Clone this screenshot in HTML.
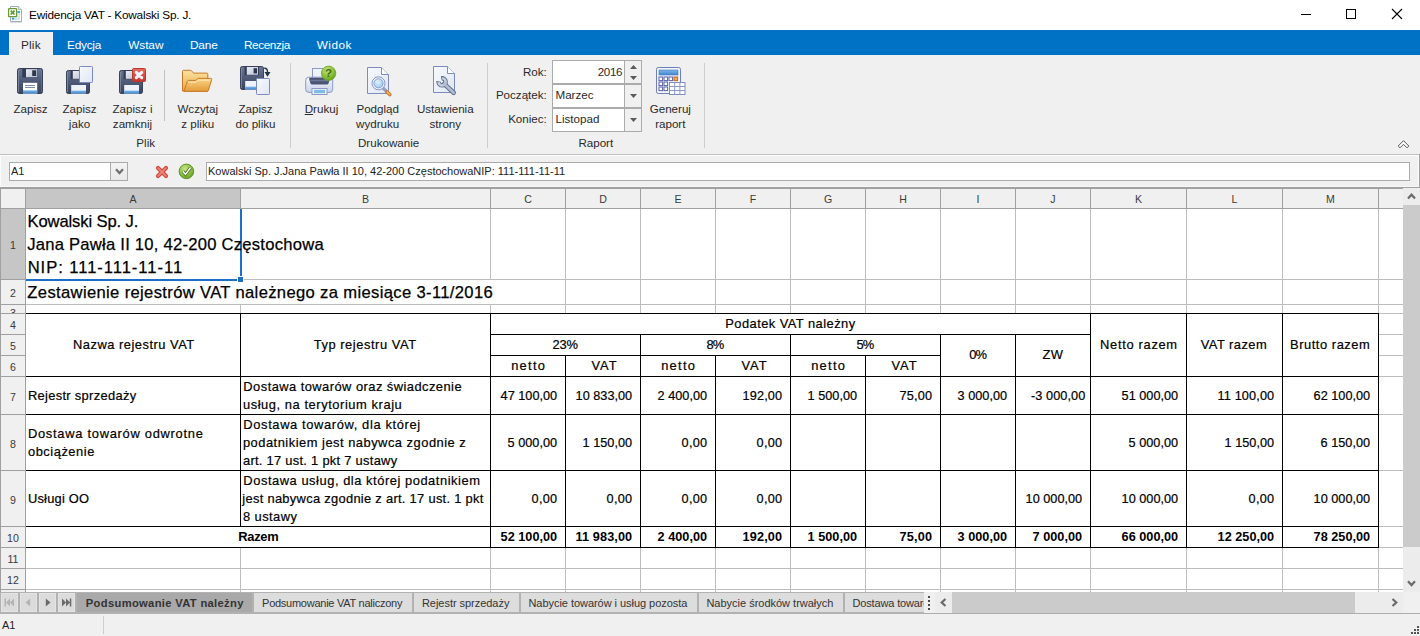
<!DOCTYPE html>
<html lang="pl"><head><meta charset="utf-8"><title>Ewidencja VAT - Kowalski Sp. J.</title>
<style>
html,body{margin:0;padding:0;}
body{width:1420px;height:636px;overflow:hidden;position:relative;background:#f0f0f0;font-family:"Liberation Sans", sans-serif;}
.t{position:absolute;white-space:pre;line-height:1;font-family:"Liberation Sans", sans-serif;}
.r{position:absolute;}
svg{position:absolute;overflow:visible;}
</style></head><body>
<div id="titlebar">
<div class="r" style="left:0px;top:0px;width:1420px;height:30px;background:#ffffff;"></div>
<svg style="left:7px;top:5px" width="17" height="18" viewBox="0 0 17 18">
<path d="M3.500 17.200h11.500" stroke="#c9cfd2" stroke-width="1"/>
<path d="M3.500 1.500h8l3 3v12h-11z" fill="#fdfefe" stroke="#a3b0b8" stroke-width="1"/>
<path d="M11.500 1.500v3h3" fill="#eef2f4" stroke="#a3b0b8" stroke-width=".8"/>
<rect x="10.400" y="6" width="2.500" height="2.200" fill="#2fa8f0"/>
<rect x="10.400" y="9" width="2.500" height="1.600" fill="#d5dde2"/><rect x="10.400" y="11" width="2.500" height="1.600" fill="#d5dde2"/>
<rect x="5" y="12.600" width="2.300" height="2.100" fill="#2fa8f0"/><rect x="8" y="12.600" width="2" height="2.100" fill="#b9dff8"/><rect x="10.600" y="12.600" width="2.300" height="2.100" fill="#d5dde2"/>
<rect x="1.600" y="3.600" width="8" height="8" rx=".6" fill="#ffffff" stroke="#6b9b37" stroke-width="1.300"/>
<path d="M3.700 5.700l3.800 3.800M7.500 5.700l-3.800 3.800" stroke="#5f9a2c" stroke-width="1.700"/>
</svg>
<span class="t" style="top:10.00px;font-size:11.8px;color:#000;letter-spacing:-0.208px;left:29.11px;">Ewidencja VAT - Kowalski Sp. J.</span>
<div class="r" style="left:1301px;top:14px;width:10px;height:1px;background:#000;"></div>
<div class="r" style="left:1346px;top:9px;width:10px;height:10px;background:transparent;box-sizing:border-box;border:1px solid #000;"></div>
<svg style="left:1392px;top:9px" width="10" height="10" viewBox="0 0 10 10"><path d="M0 0L10 10M10 0L0 10" stroke="#000" stroke-width="1.1"/></svg>
</div><div id="ribbon-tabs">
<div class="r" style="left:0px;top:30px;width:1420px;height:25px;background:#0072c6;"></div>
<div class="r" style="left:9px;top:32px;width:44px;height:23px;background:#f0f0f0;"></div>
<span class="t" style="top:40.00px;font-size:11.8px;color:#2b2b2b;letter-spacing:0.229px;left:20.91px;">Plik</span>
<span class="t" style="top:40.00px;font-size:11.8px;color:#ffffff;letter-spacing:-0.223px;left:67.01px;">Edycja</span>
<span class="t" style="top:40.00px;font-size:11.8px;color:#ffffff;letter-spacing:-0.049px;left:128.21px;">Wstaw</span>
<span class="t" style="top:40.00px;font-size:11.8px;color:#ffffff;letter-spacing:-0.169px;left:190.01px;">Dane</span>
<span class="t" style="top:40.00px;font-size:11.8px;color:#ffffff;letter-spacing:-0.399px;left:243.91px;">Recenzja</span>
<span class="t" style="top:40.00px;font-size:11.8px;color:#ffffff;letter-spacing:0.504px;left:316.71px;">Widok</span>
</div><div id="ribbon">
<div class="r" style="left:0px;top:55px;width:1420px;height:99px;background:#f0f0f0;"></div>
<div class="r" style="left:0px;top:154px;width:1419px;height:1px;background:#c0c0c0;"></div>
<span class="t" style="top:103.00px;font-size:11.6px;color:#2a2a2a;left:-269.50px;width:600px;text-align:center;">Zapisz</span>
<span class="t" style="top:103.00px;font-size:11.6px;color:#2a2a2a;left:-220.50px;width:600px;text-align:center;">Zapisz</span>
<span class="t" style="top:118.00px;font-size:11.6px;color:#2a2a2a;left:-220.50px;width:600px;text-align:center;">jako</span>
<span class="t" style="top:103.00px;font-size:11.6px;color:#2a2a2a;left:-167.50px;width:600px;text-align:center;">Zapisz i</span>
<span class="t" style="top:118.00px;font-size:11.6px;color:#2a2a2a;left:-167.50px;width:600px;text-align:center;">zamknij</span>
<span class="t" style="top:103.00px;font-size:11.6px;color:#2a2a2a;left:-102.30px;width:600px;text-align:center;">Wczytaj</span>
<span class="t" style="top:118.00px;font-size:11.6px;color:#2a2a2a;left:-102.30px;width:600px;text-align:center;">z pliku</span>
<span class="t" style="top:103.00px;font-size:11.6px;color:#2a2a2a;left:-44.50px;width:600px;text-align:center;">Zapisz</span>
<span class="t" style="top:118.00px;font-size:11.6px;color:#2a2a2a;left:-44.50px;width:600px;text-align:center;">do pliku</span>
<span class="t" style="left:21.5px;width:600px;text-align:center;top:103px;font-size:11.6px;color:#2a2a2a;margin-left:0"><u>D</u>rukuj</span>
<span class="t" style="top:103.00px;font-size:11.6px;color:#2a2a2a;left:77.70px;width:600px;text-align:center;">Podgląd</span>
<span class="t" style="top:118.00px;font-size:11.6px;color:#2a2a2a;left:77.70px;width:600px;text-align:center;">wydruku</span>
<span class="t" style="top:103.00px;font-size:11.6px;color:#2a2a2a;left:145.30px;width:600px;text-align:center;">Ustawienia</span>
<span class="t" style="top:118.00px;font-size:11.6px;color:#2a2a2a;left:145.30px;width:600px;text-align:center;">strony</span>
<span class="t" style="top:103.00px;font-size:11.6px;color:#2a2a2a;left:370.30px;width:600px;text-align:center;">Generuj</span>
<span class="t" style="top:118.00px;font-size:11.6px;color:#2a2a2a;left:370.30px;width:600px;text-align:center;">raport</span>
<span class="t" style="top:137.00px;font-size:11.6px;color:#2a2a2a;left:-154.30px;width:600px;text-align:center;">Plik</span>
<span class="t" style="top:137.00px;font-size:11.6px;color:#2a2a2a;left:88.60px;width:600px;text-align:center;">Drukowanie</span>
<span class="t" style="top:137.00px;font-size:11.6px;color:#2a2a2a;left:295.80px;width:600px;text-align:center;">Raport</span>
<div class="r" style="left:164px;top:70px;width:1px;height:51px;background:#c2c2c2;"></div>
<div class="r" style="left:290px;top:63px;width:1px;height:85px;background:#cdcdcd;"></div>
<div class="r" style="left:487px;top:63px;width:1px;height:85px;background:#cdcdcd;"></div>
<div class="r" style="left:704px;top:63px;width:1px;height:85px;background:#cdcdcd;"></div>
<span class="t" style="top:66.00px;font-size:11.6px;color:#2a2a2a;right:873.20px;">Rok:</span>
<span class="t" style="top:89.00px;font-size:11.6px;color:#2a2a2a;right:873.20px;">Początek:</span>
<span class="t" style="top:113.00px;font-size:11.6px;color:#2a2a2a;right:873.20px;">Koniec:</span>
<div class="r" style="left:552px;top:60px;width:90px;height:24px;background:#ffffff;box-sizing:border-box;border:1px solid #ababab;"></div>
<div class="r" style="left:624px;top:61px;width:16px;height:22px;background:#f0f0f0;border-left:1px solid #ababab;"></div>
<div class="r" style="left:552px;top:84px;width:90px;height:24px;background:#ffffff;box-sizing:border-box;border:1px solid #ababab;"></div>
<div class="r" style="left:624px;top:85px;width:16px;height:22px;background:#f0f0f0;border-left:1px solid #ababab;"></div>
<div class="r" style="left:552px;top:108px;width:90px;height:24px;background:#ffffff;box-sizing:border-box;border:1px solid #ababab;"></div>
<div class="r" style="left:624px;top:109px;width:16px;height:22px;background:#f0f0f0;border-left:1px solid #ababab;"></div>
<span class="t" style="top:66.00px;font-size:11.6px;color:#2a2a2a;letter-spacing:-0.34px;right:797.88px;">2016</span>
<span class="t" style="top:89.00px;font-size:11.6px;color:#2a2a2a;left:555.50px;">Marzec</span>
<span class="t" style="top:113.00px;font-size:11.6px;color:#2a2a2a;left:555.50px;">Listopad</span>
<svg style="left:629px;top:60px" width="9" height="72" viewBox="0 0 9 72"><path d="M1 9h7l-3.5-4zM1 16h7l-3.5 4zM1 34h7l-3.5 4zM1 58h7l-3.5 4z" fill="#5a5a5a"/></svg>
<svg style="left:1397px;top:139px" width="13" height="11" viewBox="0 0 13 11"><path d="M1.2 7L6.5 1.7 11.8 7 10 8.8 6.5 5.3 3 8.8z" fill="#fff" stroke="#555" stroke-width="1" stroke-linejoin="miter"/></svg>
<svg width="0" height="0" style="left:0;top:0"><defs>
<linearGradient id="gfl" x1="0" y1="0" x2="0" y2="1"><stop offset="0" stop-color="#6b7896"/><stop offset="0.45" stop-color="#515d7a"/><stop offset="1" stop-color="#3a435b"/></linearGradient>
<linearGradient id="gmt" x1="0" y1="0" x2="1" y2="1"><stop offset="0" stop-color="#e8edf5"/><stop offset="1" stop-color="#b9c3d6"/></linearGradient>
<linearGradient id="gbl" x1="0" y1="0" x2="0" y2="1"><stop offset="0" stop-color="#7db8e8"/><stop offset="1" stop-color="#3f86cf"/></linearGradient>
<linearGradient id="gpp" x1="0" y1="0" x2="1" y2="1"><stop offset="0" stop-color="#f7f9fd"/><stop offset="1" stop-color="#dfe6f3"/></linearGradient>
<linearGradient id="gfo" x1="0" y1="0" x2="0" y2="1"><stop offset="0" stop-color="#fde3a0"/><stop offset="1" stop-color="#eba743"/></linearGradient>
<linearGradient id="gfo2" x1="0" y1="0" x2="0" y2="1"><stop offset="0" stop-color="#fbd587"/><stop offset="1" stop-color="#e39a38"/></linearGradient>
<linearGradient id="grd" x1="0" y1="0" x2="0" y2="1"><stop offset="0" stop-color="#ea6a5f"/><stop offset="1" stop-color="#c5352c"/></linearGradient>
<radialGradient id="ggr" cx="0.4" cy="0.3" r="0.8"><stop offset="0" stop-color="#c4e27c"/><stop offset="0.6" stop-color="#86bd33"/><stop offset="1" stop-color="#5b9420"/></radialGradient>
<linearGradient id="gpr" x1="0" y1="0" x2="0" y2="1"><stop offset="0" stop-color="#f4f7fc"/><stop offset="1" stop-color="#c9d3ea"/></linearGradient>
<radialGradient id="gln" cx="0.4" cy="0.35" r="0.8"><stop offset="0" stop-color="#e2f1fb"/><stop offset="1" stop-color="#8dc3ea"/></radialGradient>
<linearGradient id="gwr" x1="0" y1="0" x2="1" y2="1"><stop offset="0" stop-color="#d5dcea"/><stop offset="1" stop-color="#8e9bb6"/></linearGradient>
</defs></svg>
<svg style="left:17px;top:68px" width="26" height="26" viewBox="0 0 26 26">
<rect x="0.5" y="0.5" width="25" height="25" rx="1.8" fill="url(#gfl)" stroke="#3a4259"/>
<path d="M1.5 2v22" stroke="#8893ac" stroke-width="1" opacity=".7"/><path d="M24.5 2v22" stroke="#6f7b96" stroke-width="1" opacity=".6"/>
<rect x="5.3" y="0.8" width="15.7" height="8.8" fill="#343b52"/>
<rect x="9" y="1.2" width="11.3" height="8" fill="url(#gmt)"/>
<rect x="15.2" y="2.3" width="4" height="5.7" fill="#2f364c"/>
<rect x="6" y="14.8" width="14.2" height="10.7" fill="#ffffff"/>
<rect x="6" y="22.3" width="14.2" height="3.2" fill="url(#gbl)"/>
<rect x="8" y="17" width="10" height="1" fill="#7f8db3"/><rect x="8" y="19" width="10" height="1" fill="#7f8db3"/>
</svg>
<svg style="left:66px;top:70px" width="24" height="24" viewBox="0 0 24 24">
<rect x="0.5" y="0.5" width="23" height="23" rx="1.8" fill="url(#gfl)" stroke="#3a4259"/>
<path d="M1.5 2v20" stroke="#8893ac" stroke-width="1" opacity=".7"/>
<rect x="4.6" y="0.8" width="14.4" height="8.4" fill="#343b52"/>
<rect x="6.8" y="1" width="11.2" height="7.8" fill="url(#gmt)"/>
<rect x="13.6" y="2.2" width="3.4" height="5.2" fill="#2f364c"/>
<rect x="5.2" y="15" width="14.8" height="8.5" fill="#eef2f9"/>
<rect x="5.2" y="20.6" width="14.8" height="2.9" fill="url(#gbl)"/>
</svg>
<svg style="left:79px;top:66px" width="14" height="17" viewBox="0 0 14 17"><rect x="0.5" y="0.5" width="13" height="16" rx="0.8" fill="url(#gpp)" stroke="#7d8bc0"/></svg>
<svg style="left:119px;top:70px" width="24" height="24" viewBox="0 0 24 24">
<rect x="0.5" y="0.5" width="23" height="23" rx="1.8" fill="url(#gfl)" stroke="#3a4259"/>
<path d="M1.5 2v20" stroke="#8893ac" stroke-width="1" opacity=".7"/>
<rect x="4.6" y="0.8" width="14.4" height="8.4" fill="#343b52"/>
<rect x="6.8" y="1" width="11.2" height="7.8" fill="url(#gmt)"/>
<rect x="13.6" y="2.2" width="3.4" height="5.2" fill="#2f364c"/>
<rect x="5.2" y="15" width="14.8" height="8.5" fill="#eef2f9"/>
<rect x="5.2" y="20.6" width="14.8" height="2.9" fill="url(#gbl)"/>
</svg>
<svg style="left:132px;top:68px" width="14" height="14" viewBox="0 0 14 14"><rect x="0.5" y="0.5" width="13" height="13" rx="1" fill="url(#grd)" stroke="#b8392f"/><path d="M4.300 4.300l5.400 5.400M9.700 4.300l-5.400 5.400" stroke="#f3f6fa" stroke-width="3.100" stroke-linecap="round"/></svg>
<svg style="left:181px;top:69px" width="32" height="24" viewBox="0 0 32 24">
<path d="M1.5 2.3q0-1 1-1h7q.8 0 1.4.8l1.6 2h13.3q1 0 1 1v16.9h-25.3z" fill="url(#gfo)" stroke="#c57a2b" stroke-width="1"/>
<path d="M3 22.3L6.3 12.3q.3-.9 1.2-.9h7.3l2-2h13q1.2 0 .9 1.1l-3.300 11q-.3.9-1.200.9h-22.500q-1 0-.7-.9z" fill="url(#gfo2)" stroke="#c57a2b" stroke-width="1"/>
<path d="M7 13.200h8l2-2h12" stroke="#fff0c4" stroke-width="1" fill="none" opacity=".8"/>
</svg>
<svg style="left:240px;top:66px" width="24" height="24" viewBox="0 0 24 24">
<rect x="0.5" y="0.5" width="23" height="23" rx="1.8" fill="url(#gfl)" stroke="#3a4259"/>
<path d="M1.5 2v20" stroke="#8893ac" stroke-width="1" opacity=".7"/>
<rect x="4.6" y="0.8" width="14.4" height="8.4" fill="#343b52"/>
<rect x="6.8" y="1" width="11.2" height="7.8" fill="url(#gmt)"/>
<rect x="13.6" y="2.2" width="3.4" height="5.2" fill="#2f364c"/>
<rect x="5.2" y="15" width="14.8" height="8.5" fill="#eef2f9"/>
<rect x="5.2" y="20.6" width="14.8" height="2.9" fill="url(#gbl)"/>
</svg>
<svg style="left:256px;top:78px" width="14" height="17" viewBox="0 0 14 17"><rect x="0.5" y="0.5" width="13" height="16" rx="0.8" fill="url(#gpp)" stroke="#7d8bc0"/></svg>
<svg style="left:263px;top:66px" width="9" height="12" viewBox="0 0 9 12"><path d="M1.200 2.200q3.300-.3 3.300 3.800" fill="none" stroke="#1d3646" stroke-width="1.4"/><path d="M1.500 6h6l-3 4.800z" fill="#1d3646"/></svg>
<svg style="left:305px;top:66px" width="32" height="30" viewBox="0 0 32 30">
<rect x="7.500" y="2.500" width="13" height="12" fill="#eef2f9" stroke="#8c99c6"/>
<rect x="0.700" y="11.200" width="27" height="15.200" rx="3" fill="url(#gpr)" stroke="#8c99c6"/>
<path d="M5 11.800h19q1.200 0 .8 1.400l-1.200 4q-.4 1.300-1.700 1.300h-14.800q-1.300 0-1.700-1.300l-1.200-4q-.4-1.400.8-1.400z" fill="#4a5574"/>
<path d="M5.500 14.500h18" stroke="#6c7896" stroke-width="1.500"/>
<rect x="7" y="22.500" width="15" height="6" fill="#f3f6fb" stroke="#8c99c6"/>
<rect x="9" y="23.800" width="11" height="3.400" fill="#7fbbe9"/>
<circle cx="23.600" cy="7.300" r="7.200" fill="url(#ggr)" stroke="#6fa52a" stroke-width=".8"/>
<text x="23.600" y="11.300" font-family="Liberation Sans, sans-serif" font-weight="700" font-size="11.500" text-anchor="middle" fill="#3f6a16">?</text>
</svg>
<svg style="left:367px;top:67px" width="22" height="27" viewBox="0 0 22 27"><path d="M0.5 0.5h14l7 7v19h-21z" fill="url(#gpp)" stroke="#7d8bc0"/><path d="M14.5 0.5v7h7" fill="#fbfcfe" stroke="#7d8bc0"/></svg>
<svg style="left:369px;top:74px" width="24" height="24" viewBox="0 0 24 24">
<path d="M14.500 14.500l6.300 6" stroke="#9aa3b8" stroke-width="3.200" stroke-linecap="round"/>
<path d="M18 18l2.800 2.600" stroke="#c9782a" stroke-width="3.400" stroke-linecap="round"/>
<path d="M18.300 18.200l2.300 2.200" stroke="#f0b45e" stroke-width="1.600" stroke-linecap="round"/>
<circle cx="9.500" cy="9.300" r="6.500" fill="#f4f7fc" stroke="#8693c4" stroke-width="1"/>
<circle cx="9.500" cy="9.300" r="4.600" fill="url(#gln)" stroke="#7b8fc4" stroke-width=".8"/>
</svg>
<svg style="left:433px;top:66px" width="22" height="27" viewBox="0 0 22 27"><path d="M0.5 0.5h14l7 7v19h-21z" fill="url(#gpp)" stroke="#7d8bc0"/><path d="M14.5 0.5v7h7" fill="#fbfcfe" stroke="#7d8bc0"/></svg>
<svg style="left:436px;top:74px" width="22" height="22" viewBox="0 0 22 22"><g transform="translate(6 7.800) rotate(43)">
<path d="M-2.900 -2.100A3.600 3.600 0 1 1 -2.900 2.100" fill="none" stroke="#5d6b8c" stroke-width="4.400"/>
<path d="M3 0H16" stroke="#5d6b8c" stroke-width="4.600" stroke-linecap="round"/>
<path d="M-2.300 -2.700A3.600 3.600 0 1 1 -2.300 2.700" fill="none" stroke="#c6cedf" stroke-width="2.500"/>
<path d="M3 0H16" stroke="#b3bed3" stroke-width="2.700" stroke-linecap="round"/>
</g></svg>
<svg style="left:656px;top:67px" width="30" height="28" viewBox="0 0 30 28">
<rect x="0.500" y="0.500" width="24" height="26" rx="1.800" fill="#f2f5fb" stroke="#6f7fbd"/>
<rect x="3" y="3" width="19" height="5" fill="url(#gbl)" stroke="#4c79c4" stroke-width=".6"/>
<rect x="3" y="10" width="3.600" height="3.600" fill="#fff" stroke="#5c63a8" stroke-width="1"/><rect x="8" y="10" width="3.600" height="3.600" fill="#fff" stroke="#5c63a8" stroke-width="1"/><rect x="13" y="10" width="3.600" height="3.600" fill="#fff" stroke="#5c63a8" stroke-width="1"/><rect x="18" y="10" width="3.600" height="3.600" fill="#f4b04a" stroke="#c26a1f" stroke-width="1"/><rect x="3" y="15" width="3.600" height="3.600" fill="#fff" stroke="#5c63a8" stroke-width="1"/><rect x="8" y="15" width="3.600" height="3.600" fill="#fff" stroke="#5c63a8" stroke-width="1"/><rect x="3" y="20" width="3.600" height="3.600" fill="#fff" stroke="#5c63a8" stroke-width="1"/><rect x="8" y="20" width="3.600" height="3.600" fill="#fff" stroke="#5c63a8" stroke-width="1"/>
<rect x="13.500" y="15.500" width="15.500" height="12" fill="#ffffff" stroke="#7f8cc2"/>
<path d="M13.500 19.500h15.500M13.500 23.500h15.500M18.700 15.500v12M23.900 15.500v12" stroke="#8a96c8" stroke-width="1"/>
</svg>
</div><div id="formula-bar">
<div class="r" style="left:0px;top:155px;width:1420px;height:32px;background:#f0f0f0;"></div>
<div class="r" style="left:0px;top:155px;width:1419px;height:1px;background:#fcfcfc;"></div>
<div class="r" style="left:0px;top:155px;width:1px;height:31px;background:#fcfcfc;"></div>
<div class="r" style="left:1418px;top:156px;width:1px;height:31px;background:#fafafa;"></div>
<div class="r" style="left:1419px;top:154px;width:1px;height:34px;background:#a0a0a0;"></div>
<div class="r" style="left:9px;top:162px;width:119px;height:19px;background:#ffffff;box-sizing:border-box;border:1px solid #ababab;"></div>
<div class="r" style="left:110px;top:163px;width:16px;height:17px;background:#f0f0f0;border-left:1px solid #ababab;background:linear-gradient(#f4f4f4,#e9e9e9);"></div>
<svg style="left:115px;top:168px" width="9" height="7" viewBox="0 0 9 7"><path d="M1 1.200l3.500 3.900L8 1.200" fill="none" stroke="#707070" stroke-width="2.200"/></svg>
<span class="t" style="top:166.00px;font-size:11px;color:#222;left:11.00px;">A1</span>
<div class="r" style="left:206px;top:162px;width:1204px;height:19px;background:#ffffff;box-sizing:border-box;border:1px solid #ababab;"></div>
<span class="t" style="top:166.00px;font-size:11px;color:#222;left:208.00px;">Kowalski Sp. J.Jana Pawła II 10, 42-200 CzęstochowaNIP: 111-111-11-11</span>
<svg style="left:155px;top:165px" width="14" height="14" viewBox="0 0 14 14"><path d="M3 3l8 8M11 3l-8 8" stroke="#cf4b40" stroke-width="4.200" stroke-linecap="round"/><path d="M3.200 3.200l7.600 7.600M10.800 3.200l-7.600 7.600" stroke="#ee8579" stroke-width="1.800" stroke-linecap="round"/></svg>
<svg style="left:178px;top:163px" width="17" height="17" viewBox="0 0 17 17"><defs><radialGradient id="gok" cx="0.4" cy="0.3" r="0.8"><stop offset="0" stop-color="#c5e38a"/><stop offset="0.6" stop-color="#86bb3a"/><stop offset="1" stop-color="#5e9425"/></radialGradient></defs><circle cx="8.400" cy="8.400" r="7.300" fill="url(#gok)" stroke="#5f962a" stroke-width="1"/><path d="M5 8.400l2.500 3 5-6.800" fill="none" stroke="#4b6f28" stroke-width="3"/><path d="M5 8.400l2.500 3 5-6.800" fill="none" stroke="#ffffff" stroke-width="1.500"/></svg>
</div>
<div id="sheet">
<div class="r" style="left:0px;top:186px;width:1419px;height:1px;background:#f8f8f8;"></div>
<div class="r" style="left:0px;top:187px;width:1420px;height:1px;background:#a0a0a0;"></div>
<div class="r" style="left:0px;top:188px;width:1403px;height:1px;background:#a0a0a0;"></div>
<div class="r" style="left:0px;top:189px;width:1403px;height:403px;background:#ffffff;"></div>
<div class="r" style="left:0px;top:189px;width:1403px;height:19px;background:#f0f0f0;"></div>
<div class="r" style="left:0px;top:189px;width:25px;height:403px;background:#f0f0f0;"></div>
<div class="r" style="left:26px;top:189px;width:214px;height:19px;background:#c6c6c6;"></div>
<div class="r" style="left:1px;top:209px;width:24px;height:70px;background:#c6c6c6;"></div>
<div class="r" style="left:0px;top:189px;width:1px;height:403px;background:#a0a0a0;"></div>
<div class="r" style="left:0px;top:208px;width:1403px;height:1px;background:#a0a0a0;"></div>
<div class="r" style="left:25px;top:189px;width:1px;height:403px;background:#a0a0a0;"></div>
<div class="r" style="left:240px;top:189px;width:1px;height:19px;background:#a0a0a0;"></div>
<div class="r" style="left:490px;top:189px;width:1px;height:19px;background:#a0a0a0;"></div>
<div class="r" style="left:565px;top:189px;width:1px;height:19px;background:#a0a0a0;"></div>
<div class="r" style="left:640px;top:189px;width:1px;height:19px;background:#a0a0a0;"></div>
<div class="r" style="left:715px;top:189px;width:1px;height:19px;background:#a0a0a0;"></div>
<div class="r" style="left:790px;top:189px;width:1px;height:19px;background:#a0a0a0;"></div>
<div class="r" style="left:865px;top:189px;width:1px;height:19px;background:#a0a0a0;"></div>
<div class="r" style="left:940px;top:189px;width:1px;height:19px;background:#a0a0a0;"></div>
<div class="r" style="left:1015px;top:189px;width:1px;height:19px;background:#a0a0a0;"></div>
<div class="r" style="left:1090px;top:189px;width:1px;height:19px;background:#a0a0a0;"></div>
<div class="r" style="left:1186px;top:189px;width:1px;height:19px;background:#a0a0a0;"></div>
<div class="r" style="left:1282px;top:189px;width:1px;height:19px;background:#a0a0a0;"></div>
<div class="r" style="left:1378px;top:189px;width:1px;height:19px;background:#a0a0a0;"></div>
<div class="r" style="left:0px;top:279px;width:25px;height:1px;background:#a0a0a0;"></div>
<div class="r" style="left:0px;top:304px;width:25px;height:1px;background:#a0a0a0;"></div>
<div class="r" style="left:0px;top:313px;width:25px;height:1px;background:#a0a0a0;"></div>
<div class="r" style="left:0px;top:334px;width:25px;height:1px;background:#a0a0a0;"></div>
<div class="r" style="left:0px;top:355px;width:25px;height:1px;background:#a0a0a0;"></div>
<div class="r" style="left:0px;top:376px;width:25px;height:1px;background:#a0a0a0;"></div>
<div class="r" style="left:0px;top:414px;width:25px;height:1px;background:#a0a0a0;"></div>
<div class="r" style="left:0px;top:470px;width:25px;height:1px;background:#a0a0a0;"></div>
<div class="r" style="left:0px;top:526px;width:25px;height:1px;background:#a0a0a0;"></div>
<div class="r" style="left:0px;top:547px;width:25px;height:1px;background:#a0a0a0;"></div>
<div class="r" style="left:0px;top:568px;width:25px;height:1px;background:#a0a0a0;"></div>
<div class="r" style="left:0px;top:589px;width:25px;height:1px;background:#a0a0a0;"></div>
<div class="r" style="left:26px;top:279px;width:1377px;height:1px;background:#bdbdbd;"></div>
<div class="r" style="left:26px;top:304px;width:1377px;height:1px;background:#bdbdbd;"></div>
<div class="r" style="left:26px;top:568px;width:1377px;height:1px;background:#bdbdbd;"></div>
<div class="r" style="left:26px;top:589px;width:1377px;height:1px;background:#bdbdbd;"></div>
<div class="r" style="left:1379px;top:313px;width:24px;height:1px;background:#bdbdbd;"></div>
<div class="r" style="left:1379px;top:334px;width:24px;height:1px;background:#bdbdbd;"></div>
<div class="r" style="left:1379px;top:355px;width:24px;height:1px;background:#bdbdbd;"></div>
<div class="r" style="left:1379px;top:376px;width:24px;height:1px;background:#bdbdbd;"></div>
<div class="r" style="left:1379px;top:414px;width:24px;height:1px;background:#bdbdbd;"></div>
<div class="r" style="left:1379px;top:470px;width:24px;height:1px;background:#bdbdbd;"></div>
<div class="r" style="left:1379px;top:526px;width:24px;height:1px;background:#bdbdbd;"></div>
<div class="r" style="left:1379px;top:547px;width:24px;height:1px;background:#bdbdbd;"></div>
<div class="r" style="left:240px;top:209px;width:1px;height:104px;background:#bdbdbd;"></div>
<div class="r" style="left:240px;top:548px;width:1px;height:44px;background:#bdbdbd;"></div>
<div class="r" style="left:490px;top:209px;width:1px;height:104px;background:#bdbdbd;"></div>
<div class="r" style="left:490px;top:548px;width:1px;height:44px;background:#bdbdbd;"></div>
<div class="r" style="left:565px;top:209px;width:1px;height:104px;background:#bdbdbd;"></div>
<div class="r" style="left:565px;top:548px;width:1px;height:44px;background:#bdbdbd;"></div>
<div class="r" style="left:640px;top:209px;width:1px;height:104px;background:#bdbdbd;"></div>
<div class="r" style="left:640px;top:548px;width:1px;height:44px;background:#bdbdbd;"></div>
<div class="r" style="left:715px;top:209px;width:1px;height:104px;background:#bdbdbd;"></div>
<div class="r" style="left:715px;top:548px;width:1px;height:44px;background:#bdbdbd;"></div>
<div class="r" style="left:790px;top:209px;width:1px;height:104px;background:#bdbdbd;"></div>
<div class="r" style="left:790px;top:548px;width:1px;height:44px;background:#bdbdbd;"></div>
<div class="r" style="left:865px;top:209px;width:1px;height:104px;background:#bdbdbd;"></div>
<div class="r" style="left:865px;top:548px;width:1px;height:44px;background:#bdbdbd;"></div>
<div class="r" style="left:940px;top:209px;width:1px;height:104px;background:#bdbdbd;"></div>
<div class="r" style="left:940px;top:548px;width:1px;height:44px;background:#bdbdbd;"></div>
<div class="r" style="left:1015px;top:209px;width:1px;height:104px;background:#bdbdbd;"></div>
<div class="r" style="left:1015px;top:548px;width:1px;height:44px;background:#bdbdbd;"></div>
<div class="r" style="left:1090px;top:209px;width:1px;height:104px;background:#bdbdbd;"></div>
<div class="r" style="left:1090px;top:548px;width:1px;height:44px;background:#bdbdbd;"></div>
<div class="r" style="left:1186px;top:209px;width:1px;height:104px;background:#bdbdbd;"></div>
<div class="r" style="left:1186px;top:548px;width:1px;height:44px;background:#bdbdbd;"></div>
<div class="r" style="left:1282px;top:209px;width:1px;height:104px;background:#bdbdbd;"></div>
<div class="r" style="left:1282px;top:548px;width:1px;height:44px;background:#bdbdbd;"></div>
<div class="r" style="left:1378px;top:209px;width:1px;height:104px;background:#bdbdbd;"></div>
<div class="r" style="left:1378px;top:548px;width:1px;height:44px;background:#bdbdbd;"></div>
<div class="r" style="left:240px;top:280px;width:1px;height:24px;background:#fff;"></div>
<div class="r" style="left:490px;top:280px;width:1px;height:24px;background:#fff;"></div>
<div class="r" style="left:26px;top:313px;width:1353px;height:1px;background:#000000;"></div>
<div class="r" style="left:26px;top:376px;width:1353px;height:1px;background:#000000;"></div>
<div class="r" style="left:26px;top:414px;width:1353px;height:1px;background:#000000;"></div>
<div class="r" style="left:26px;top:470px;width:1353px;height:1px;background:#000000;"></div>
<div class="r" style="left:26px;top:526px;width:1353px;height:1px;background:#000000;"></div>
<div class="r" style="left:26px;top:547px;width:1353px;height:1px;background:#000000;"></div>
<div class="r" style="left:490px;top:334px;width:601px;height:1px;background:#000000;"></div>
<div class="r" style="left:490px;top:355px;width:451px;height:1px;background:#000000;"></div>
<div class="r" style="left:490px;top:313px;width:1px;height:235px;background:#000000;"></div>
<div class="r" style="left:1090px;top:313px;width:1px;height:235px;background:#000000;"></div>
<div class="r" style="left:1186px;top:313px;width:1px;height:235px;background:#000000;"></div>
<div class="r" style="left:1282px;top:313px;width:1px;height:235px;background:#000000;"></div>
<div class="r" style="left:1378px;top:313px;width:1px;height:235px;background:#000000;"></div>
<div class="r" style="left:240px;top:313px;width:1px;height:214px;background:#000000;"></div>
<div class="r" style="left:640px;top:334px;width:1px;height:214px;background:#000000;"></div>
<div class="r" style="left:790px;top:334px;width:1px;height:214px;background:#000000;"></div>
<div class="r" style="left:940px;top:334px;width:1px;height:214px;background:#000000;"></div>
<div class="r" style="left:1015px;top:334px;width:1px;height:214px;background:#000000;"></div>
<div class="r" style="left:565px;top:355px;width:1px;height:193px;background:#000000;"></div>
<div class="r" style="left:715px;top:355px;width:1px;height:193px;background:#000000;"></div>
<div class="r" style="left:865px;top:355px;width:1px;height:193px;background:#000000;"></div>
<div class="r" style="left:240px;top:209px;width:2px;height:72px;background:#1a6fc9;"></div>
<div class="r" style="left:26px;top:279px;width:216px;height:2px;background:#1a6fc9;"></div>
<div class="r" style="left:237px;top:276px;width:7px;height:7px;background:#ffffff;"></div>
<div class="r" style="left:238px;top:277px;width:5px;height:5px;background:#1a6fc9;"></div>
<span class="t" style="top:194.00px;font-size:10.6px;color:#3a3a3a;left:-167.00px;width:600px;text-align:center;">A</span>
<span class="t" style="top:194.00px;font-size:10.6px;color:#3a3a3a;left:65.50px;width:600px;text-align:center;">B</span>
<span class="t" style="top:194.00px;font-size:10.6px;color:#3a3a3a;left:228.00px;width:600px;text-align:center;">C</span>
<span class="t" style="top:194.00px;font-size:10.6px;color:#3a3a3a;left:303.00px;width:600px;text-align:center;">D</span>
<span class="t" style="top:194.00px;font-size:10.6px;color:#3a3a3a;left:378.00px;width:600px;text-align:center;">E</span>
<span class="t" style="top:194.00px;font-size:10.6px;color:#3a3a3a;left:453.00px;width:600px;text-align:center;">F</span>
<span class="t" style="top:194.00px;font-size:10.6px;color:#3a3a3a;left:528.00px;width:600px;text-align:center;">G</span>
<span class="t" style="top:194.00px;font-size:10.6px;color:#3a3a3a;left:603.00px;width:600px;text-align:center;">H</span>
<span class="t" style="top:194.00px;font-size:10.6px;color:#3a3a3a;left:678.00px;width:600px;text-align:center;">I</span>
<span class="t" style="top:194.00px;font-size:10.6px;color:#3a3a3a;left:753.00px;width:600px;text-align:center;">J</span>
<span class="t" style="top:194.00px;font-size:10.6px;color:#3a3a3a;left:838.50px;width:600px;text-align:center;">K</span>
<span class="t" style="top:194.00px;font-size:10.6px;color:#3a3a3a;left:934.50px;width:600px;text-align:center;">L</span>
<span class="t" style="top:194.00px;font-size:10.6px;color:#3a3a3a;left:1030.50px;width:600px;text-align:center;">M</span>
<span class="t" style="top:240.00px;font-size:10.6px;color:#3a3a3a;left:-287.00px;width:600px;text-align:center;">1</span>
<span class="t" style="top:288.00px;font-size:10.6px;color:#3a3a3a;left:-287.00px;width:600px;text-align:center;">2</span>
<div class="r" style="left:1px;top:305px;width:24px;height:8px;overflow:hidden"><span class="t" style="left:-288px;width:600px;text-align:center;top:2.53px;font-size:10.6px;color:#3a3a3a">3</span></div>
<span class="t" style="top:320.00px;font-size:10.6px;color:#3a3a3a;left:-287.00px;width:600px;text-align:center;">4</span>
<span class="t" style="top:341.00px;font-size:10.6px;color:#3a3a3a;left:-287.00px;width:600px;text-align:center;">5</span>
<span class="t" style="top:362.00px;font-size:10.6px;color:#3a3a3a;left:-287.00px;width:600px;text-align:center;">6</span>
<span class="t" style="top:392.00px;font-size:10.6px;color:#3a3a3a;left:-287.00px;width:600px;text-align:center;">7</span>
<span class="t" style="top:439.00px;font-size:10.6px;color:#3a3a3a;left:-287.00px;width:600px;text-align:center;">8</span>
<span class="t" style="top:495.00px;font-size:10.6px;color:#3a3a3a;left:-287.00px;width:600px;text-align:center;">9</span>
<span class="t" style="top:533.00px;font-size:10.6px;color:#3a3a3a;left:-287.00px;width:600px;text-align:center;">10</span>
<span class="t" style="top:554.00px;font-size:10.6px;color:#3a3a3a;left:-287.00px;width:600px;text-align:center;">11</span>
<span class="t" style="top:575.00px;font-size:10.6px;color:#3a3a3a;left:-287.00px;width:600px;text-align:center;">12</span>
<span class="t" style="top:214.00px;font-size:16.6px;color:#000;-webkit-text-stroke:0.25px #000;letter-spacing:-0.124px;left:27.47px;">Kowalski Sp. J.</span>
<span class="t" style="top:237.00px;font-size:16.6px;color:#000;-webkit-text-stroke:0.25px #000;letter-spacing:0.249px;left:27.17px;">Jana Pawła II 10, 42-200 Częstochowa</span>
<span class="t" style="top:260.00px;font-size:16.6px;color:#000;-webkit-text-stroke:0.25px #000;letter-spacing:0.947px;left:27.67px;">NIP: 111-111-11-11</span>
<span class="t" style="top:285.00px;font-size:16.6px;color:#000;-webkit-text-stroke:0.25px #000;letter-spacing:0.343px;left:27.37px;">Zestawienie rejestrów VAT należnego za miesiące 3-11/2016</span>
<span class="t" style="top:339.00px;font-size:12.9px;color:#000;-webkit-text-stroke:0.2px #000;letter-spacing:0.5px;left:-166.40px;width:600px;text-align:center;text-indent:0.5px;">Nazwa rejestru VAT</span>
<span class="t" style="top:339.00px;font-size:12.9px;color:#000;-webkit-text-stroke:0.2px #000;letter-spacing:0.556px;left:64.90px;width:600px;text-align:center;text-indent:0.556px;">Typ rejestru VAT</span>
<span class="t" style="top:318.00px;font-size:12.9px;color:#000;-webkit-text-stroke:0.2px #000;letter-spacing:0.444px;left:490.20px;width:600px;text-align:center;text-indent:0.444px;">Podatek VAT należny</span>
<span class="t" style="top:339.00px;font-size:12.9px;color:#000;-webkit-text-stroke:0.2px #000;letter-spacing:-0.162px;left:265.30px;width:600px;text-align:center;text-indent:-0.162px;">23%</span>
<span class="t" style="top:339.00px;font-size:12.9px;color:#000;-webkit-text-stroke:0.2px #000;letter-spacing:-0.948px;left:415.30px;width:600px;text-align:center;text-indent:-0.948px;">8%</span>
<span class="t" style="top:339.00px;font-size:12.9px;color:#000;-webkit-text-stroke:0.2px #000;letter-spacing:-0.948px;left:565.30px;width:600px;text-align:center;text-indent:-0.948px;">5%</span>
<span class="t" style="top:360.00px;font-size:12.9px;color:#000;-webkit-text-stroke:0.2px #000;letter-spacing:1.276px;left:228.05px;width:600px;text-align:center;text-indent:1.276px;">netto</span>
<span class="t" style="top:360.00px;font-size:12.9px;color:#000;-webkit-text-stroke:0.2px #000;letter-spacing:1.011px;left:304.05px;width:600px;text-align:center;text-indent:1.011px;">VAT</span>
<span class="t" style="top:360.00px;font-size:12.9px;color:#000;-webkit-text-stroke:0.2px #000;letter-spacing:1.276px;left:378.05px;width:600px;text-align:center;text-indent:1.276px;">netto</span>
<span class="t" style="top:360.00px;font-size:12.9px;color:#000;-webkit-text-stroke:0.2px #000;letter-spacing:1.011px;left:454.05px;width:600px;text-align:center;text-indent:1.011px;">VAT</span>
<span class="t" style="top:360.00px;font-size:12.9px;color:#000;-webkit-text-stroke:0.2px #000;letter-spacing:1.276px;left:528.05px;width:600px;text-align:center;text-indent:1.276px;">netto</span>
<span class="t" style="top:360.00px;font-size:12.9px;color:#000;-webkit-text-stroke:0.2px #000;letter-spacing:1.011px;left:604.05px;width:600px;text-align:center;text-indent:1.011px;">VAT</span>
<span class="t" style="top:349.00px;font-size:12.9px;color:#000;-webkit-text-stroke:0.2px #000;letter-spacing:-0.948px;left:678.00px;width:600px;text-align:center;text-indent:-0.948px;">0%</span>
<span class="t" style="top:349.00px;font-size:12.9px;color:#000;-webkit-text-stroke:0.2px #000;letter-spacing:0.441px;left:752.70px;width:600px;text-align:center;text-indent:0.441px;">ZW</span>
<span class="t" style="top:339.00px;font-size:12.9px;color:#000;-webkit-text-stroke:0.2px #000;letter-spacing:0.684px;left:838.60px;width:600px;text-align:center;text-indent:0.684px;">Netto razem</span>
<span class="t" style="top:339.00px;font-size:12.9px;color:#000;-webkit-text-stroke:0.2px #000;letter-spacing:0.454px;left:933.75px;width:600px;text-align:center;text-indent:0.454px;">VAT razem</span>
<span class="t" style="top:339.00px;font-size:12.9px;color:#000;-webkit-text-stroke:0.2px #000;letter-spacing:0.541px;left:1029.95px;width:600px;text-align:center;text-indent:0.541px;">Brutto razem</span>
<span class="t" style="top:390.00px;font-size:12.9px;color:#000;-webkit-text-stroke:0.2px #000;letter-spacing:0.31px;left:27.96px;">Rejestr sprzedaży</span>
<span class="t" style="top:428.00px;font-size:12.9px;color:#000;-webkit-text-stroke:0.2px #000;letter-spacing:0.719px;left:27.96px;">Dostawa towarów odwrotne</span>
<span class="t" style="top:446.00px;font-size:12.9px;color:#000;-webkit-text-stroke:0.2px #000;letter-spacing:0.524px;left:27.96px;">obciążenie</span>
<span class="t" style="top:493.00px;font-size:12.9px;color:#000;-webkit-text-stroke:0.2px #000;letter-spacing:0.2px;left:27.96px;">Usługi OO</span>
<span class="t" style="top:381.00px;font-size:12.9px;color:#000;-webkit-text-stroke:0.2px #000;letter-spacing:0.453px;left:243.35px;">Dostawa towarów oraz świadczenie</span>
<span class="t" style="top:399.00px;font-size:12.9px;color:#000;-webkit-text-stroke:0.2px #000;letter-spacing:0.563px;left:242.95px;">usług, na terytorium kraju</span>
<span class="t" style="top:419.00px;font-size:12.9px;color:#000;-webkit-text-stroke:0.2px #000;letter-spacing:0.623px;left:243.35px;">Dostawa towarów, dla której</span>
<span class="t" style="top:437.00px;font-size:12.9px;color:#000;-webkit-text-stroke:0.2px #000;letter-spacing:0.499px;left:242.95px;">podatnikiem jest nabywca zgodnie z</span>
<span class="t" style="top:455.00px;font-size:12.9px;color:#000;-webkit-text-stroke:0.2px #000;letter-spacing:0.281px;left:242.95px;">art. 17 ust. 1 pkt 7 ustawy</span>
<span class="t" style="top:475.00px;font-size:12.9px;color:#000;-webkit-text-stroke:0.2px #000;letter-spacing:0.54px;left:243.35px;">Dostawa usług, dla której podatnikiem</span>
<span class="t" style="top:493.00px;font-size:12.9px;color:#000;-webkit-text-stroke:0.2px #000;letter-spacing:0.293px;left:242.35px;">jest nabywca zgodnie z art. 17 ust. 1 pkt</span>
<span class="t" style="top:511.00px;font-size:12.9px;color:#000;-webkit-text-stroke:0.2px #000;letter-spacing:0.441px;left:242.95px;">8 ustawy</span>
<span class="t" style="top:531.00px;font-size:12.9px;color:#000;font-weight:700;letter-spacing:-0.247px;left:-41.55px;width:600px;text-align:center;text-indent:-0.247px;">Razem</span>
<span class="t" style="top:390.00px;font-size:12.7px;color:#000;-webkit-text-stroke:0.2px #000;letter-spacing:0.01px;right:862.88px;">47 100,00</span>
<span class="t" style="top:390.00px;font-size:12.7px;color:#000;-webkit-text-stroke:0.2px #000;letter-spacing:0.01px;right:787.88px;">10 833,00</span>
<span class="t" style="top:390.00px;font-size:12.7px;color:#000;-webkit-text-stroke:0.2px #000;letter-spacing:0.02px;right:712.87px;">2 400,00</span>
<span class="t" style="top:390.00px;font-size:12.7px;color:#000;-webkit-text-stroke:0.2px #000;letter-spacing:0.147px;right:637.74px;">192,00</span>
<span class="t" style="top:390.00px;font-size:12.7px;color:#000;-webkit-text-stroke:0.2px #000;letter-spacing:0.02px;right:562.87px;">1 500,00</span>
<span class="t" style="top:390.00px;font-size:12.7px;color:#000;-webkit-text-stroke:0.2px #000;letter-spacing:0.199px;right:487.69px;">75,00</span>
<span class="t" style="top:390.00px;font-size:12.7px;color:#000;-webkit-text-stroke:0.2px #000;letter-spacing:0.02px;right:412.87px;">3 000,00</span>
<span class="t" style="top:390.00px;font-size:12.7px;color:#000;-webkit-text-stroke:0.2px #000;letter-spacing:0.064px;right:334.73px;">-3 000,00</span>
<span class="t" style="top:390.00px;font-size:12.7px;color:#000;-webkit-text-stroke:0.2px #000;letter-spacing:0.01px;right:241.88px;">51 000,00</span>
<span class="t" style="top:390.00px;font-size:12.7px;color:#000;-webkit-text-stroke:0.2px #000;letter-spacing:0.128px;right:145.76px;">11 100,00</span>
<span class="t" style="top:390.00px;font-size:12.7px;color:#000;-webkit-text-stroke:0.2px #000;letter-spacing:0.01px;right:49.88px;">62 100,00</span>
<span class="t" style="top:437.00px;font-size:12.7px;color:#000;-webkit-text-stroke:0.2px #000;letter-spacing:0.02px;right:862.87px;">5 000,00</span>
<span class="t" style="top:437.00px;font-size:12.7px;color:#000;-webkit-text-stroke:0.2px #000;letter-spacing:0.02px;right:787.87px;">1 150,00</span>
<span class="t" style="top:437.00px;font-size:12.7px;color:#000;-webkit-text-stroke:0.2px #000;letter-spacing:0.287px;right:712.60px;">0,00</span>
<span class="t" style="top:437.00px;font-size:12.7px;color:#000;-webkit-text-stroke:0.2px #000;letter-spacing:0.287px;right:637.60px;">0,00</span>
<span class="t" style="top:437.00px;font-size:12.7px;color:#000;-webkit-text-stroke:0.2px #000;letter-spacing:0.02px;right:241.87px;">5 000,00</span>
<span class="t" style="top:437.00px;font-size:12.7px;color:#000;-webkit-text-stroke:0.2px #000;letter-spacing:0.02px;right:145.87px;">1 150,00</span>
<span class="t" style="top:437.00px;font-size:12.7px;color:#000;-webkit-text-stroke:0.2px #000;letter-spacing:0.02px;right:49.87px;">6 150,00</span>
<span class="t" style="top:493.00px;font-size:12.7px;color:#000;-webkit-text-stroke:0.2px #000;letter-spacing:0.287px;right:862.60px;">0,00</span>
<span class="t" style="top:493.00px;font-size:12.7px;color:#000;-webkit-text-stroke:0.2px #000;letter-spacing:0.287px;right:787.60px;">0,00</span>
<span class="t" style="top:493.00px;font-size:12.7px;color:#000;-webkit-text-stroke:0.2px #000;letter-spacing:0.287px;right:712.60px;">0,00</span>
<span class="t" style="top:493.00px;font-size:12.7px;color:#000;-webkit-text-stroke:0.2px #000;letter-spacing:0.287px;right:637.60px;">0,00</span>
<span class="t" style="top:493.00px;font-size:12.7px;color:#000;-webkit-text-stroke:0.2px #000;letter-spacing:0.01px;right:337.88px;">10 000,00</span>
<span class="t" style="top:493.00px;font-size:12.7px;color:#000;-webkit-text-stroke:0.2px #000;letter-spacing:0.01px;right:241.88px;">10 000,00</span>
<span class="t" style="top:493.00px;font-size:12.7px;color:#000;-webkit-text-stroke:0.2px #000;letter-spacing:0.287px;right:145.61px;">0,00</span>
<span class="t" style="top:493.00px;font-size:12.7px;color:#000;-webkit-text-stroke:0.2px #000;letter-spacing:0.01px;right:49.88px;">10 000,00</span>
<span class="t" style="top:531.00px;font-size:12.7px;color:#000;font-weight:700;letter-spacing:0.01px;right:862.88px;">52 100,00</span>
<span class="t" style="top:531.00px;font-size:12.7px;color:#000;font-weight:700;letter-spacing:0.098px;right:787.79px;">11 983,00</span>
<span class="t" style="top:531.00px;font-size:12.7px;color:#000;font-weight:700;letter-spacing:0.02px;right:712.87px;">2 400,00</span>
<span class="t" style="top:531.00px;font-size:12.7px;color:#000;font-weight:700;letter-spacing:0.147px;right:637.74px;">192,00</span>
<span class="t" style="top:531.00px;font-size:12.7px;color:#000;font-weight:700;letter-spacing:0.02px;right:562.87px;">1 500,00</span>
<span class="t" style="top:531.00px;font-size:12.7px;color:#000;font-weight:700;letter-spacing:0.199px;right:487.69px;">75,00</span>
<span class="t" style="top:531.00px;font-size:12.7px;color:#000;font-weight:700;letter-spacing:0.02px;right:412.87px;">3 000,00</span>
<span class="t" style="top:531.00px;font-size:12.7px;color:#000;font-weight:700;letter-spacing:0.02px;right:337.87px;">7 000,00</span>
<span class="t" style="top:531.00px;font-size:12.7px;color:#000;font-weight:700;letter-spacing:0.01px;right:241.88px;">66 000,00</span>
<span class="t" style="top:531.00px;font-size:12.7px;color:#000;font-weight:700;letter-spacing:0.01px;right:145.88px;">12 250,00</span>
<span class="t" style="top:531.00px;font-size:12.7px;color:#000;font-weight:700;letter-spacing:0.01px;right:49.88px;">78 250,00</span>
<div class="r" style="left:1403px;top:189px;width:17px;height:403px;background:#ececec;"></div>
<div class="r" style="left:1403px;top:205px;width:17px;height:342px;background:#cbcbcb;"></div>
<svg style="left:1407px;top:193px" width="9" height="7" viewBox="0 0 9 7"><path d="M1 5.500l3.500-3.800L8 5.500" fill="none" stroke="#6a6a6a" stroke-width="2.200"/></svg>
<svg style="left:1407px;top:580px" width="9" height="7" viewBox="0 0 9 7"><path d="M1 1.300l3.500 3.800L8 1.300" fill="none" stroke="#6a6a6a" stroke-width="2.200"/></svg>
</div><div id="sheet-tabs">
<div class="r" style="left:0px;top:592px;width:924px;height:22px;background:#b2b2b2;"></div>
<div class="r" style="left:924px;top:592px;width:496px;height:21px;background:#f0f0f0;"></div>
<div class="r" style="left:924px;top:613px;width:496px;height:1px;background:#adadad;"></div>
<div class="r" style="left:1px;top:593px;width:17px;height:19px;background:#dcdcdc;box-sizing:border-box;border:1px solid #e4e4e4;"></div>
<div class="r" style="left:20px;top:593px;width:17px;height:19px;background:#dcdcdc;box-sizing:border-box;border:1px solid #e4e4e4;"></div>
<div class="r" style="left:39px;top:593px;width:17px;height:19px;background:#dcdcdc;box-sizing:border-box;border:1px solid #e4e4e4;"></div>
<div class="r" style="left:58px;top:593px;width:17px;height:19px;background:#dcdcdc;box-sizing:border-box;border:1px solid #e4e4e4;"></div>
<svg style="left:0px;top:593px" width="76" height="19" viewBox="0 0 76 19"><path d="M4.500 5.500h1.500v8h-1.500zM10 5.500v8l-4-4zM14 5.500v8l-4-4z" fill="#b4b4b4"/><path d="M30.200 5.500v8l-4.700-4z" fill="#b4b4b4"/><path d="M45.800 5.500v8l4.700-4z" fill="#6a6a6a"/><path d="M62 5.500v8l4-4zM66 5.500v8l4-4zM69.800 5.500h1.500v8h-1.500z" fill="#6a6a6a"/></svg>
<div class="r" style="left:77px;top:593px;width:175px;height:19px;background:#a9a9a9;"></div>
<span class="t" style="top:598.00px;font-size:11.2px;color:#333333;font-weight:700;letter-spacing:0.329px;left:-135.40px;width:600px;text-align:center;text-indent:0.329px;">Podsumowanie VAT należny</span>
<div class="r" style="left:254px;top:593px;width:158px;height:19px;background:#dddddd;"></div>
<span class="t" style="top:598.00px;font-size:11px;color:#333;letter-spacing:-0.256px;left:262.05px;">Podsumowanie VAT naliczony</span>
<div class="r" style="left:414px;top:593px;width:105px;height:19px;background:#dddddd;"></div>
<span class="t" style="top:598.00px;font-size:11px;color:#333;letter-spacing:-0.037px;left:421.95px;">Rejestr sprzedaży</span>
<div class="r" style="left:521px;top:593px;width:176px;height:19px;background:#dddddd;"></div>
<span class="t" style="top:598.00px;font-size:11px;color:#333;letter-spacing:-0.042px;left:528.45px;">Nabycie towarów i usług pozosta</span>
<div class="r" style="left:699px;top:593px;width:144px;height:19px;background:#dddddd;"></div>
<span class="t" style="top:598.00px;font-size:11px;color:#333;letter-spacing:-0.01px;left:706.45px;">Nabycie środków trwałych</span>
<div class="r" style="left:845px;top:593px;width:79px;height:19px;background:#dddddd;"></div>
<div class="r" style="left:845px;top:593px;width:79px;height:19px;overflow:hidden"><span class="t" style="left:7.500px;top:5px;font-size:11px;color:#333;letter-spacing:-0.150px">Dostawa towarów i usług</span></div>
<div class="r" style="left:928px;top:596px;width:2px;height:2px;background:#4a4a4a;"></div>
<div class="r" style="left:928px;top:600px;width:2px;height:2px;background:#4a4a4a;"></div>
<div class="r" style="left:928px;top:604px;width:2px;height:2px;background:#4a4a4a;"></div>
<div class="r" style="left:928px;top:608px;width:2px;height:2px;background:#4a4a4a;"></div>
<div class="r" style="left:935px;top:592px;width:468px;height:21px;background:#ececec;"></div>
<div class="r" style="left:952px;top:592px;width:403px;height:21px;background:#cbcbcb;"></div>
<svg style="left:939.500px;top:598px" width="7" height="9" viewBox="0 0 7 9"><path d="M5.500 1L1.700 4.500 5.500 8" fill="none" stroke="#6a6a6a" stroke-width="2.200"/></svg>
<svg style="left:1390.800px;top:598px" width="7" height="9" viewBox="0 0 7 9"><path d="M1.500 1L5.300 4.500 1.500 8" fill="none" stroke="#6a6a6a" stroke-width="2.200"/></svg>
</div><div id="statusbar">
<div class="r" style="left:0px;top:614px;width:1420px;height:22px;background:#f0f0f0;"></div>
<span class="t" style="top:620.00px;font-size:11px;color:#222;left:2.00px;">A1</span>
<div class="r" style="left:103px;top:616px;width:1px;height:18px;background:#cfcfcf;"></div>
<div class="r" style="left:1417px;top:626px;width:2px;height:2px;background:#555555;"></div>
<div class="r" style="left:1414px;top:629px;width:2px;height:2px;background:#555555;"></div>
<div class="r" style="left:1417px;top:629px;width:2px;height:2px;background:#555555;"></div>
<div class="r" style="left:1411px;top:632px;width:2px;height:2px;background:#555555;"></div>
<div class="r" style="left:1414px;top:632px;width:2px;height:2px;background:#555555;"></div>
<div class="r" style="left:1417px;top:632px;width:2px;height:2px;background:#555555;"></div>
</div>
</body></html>
